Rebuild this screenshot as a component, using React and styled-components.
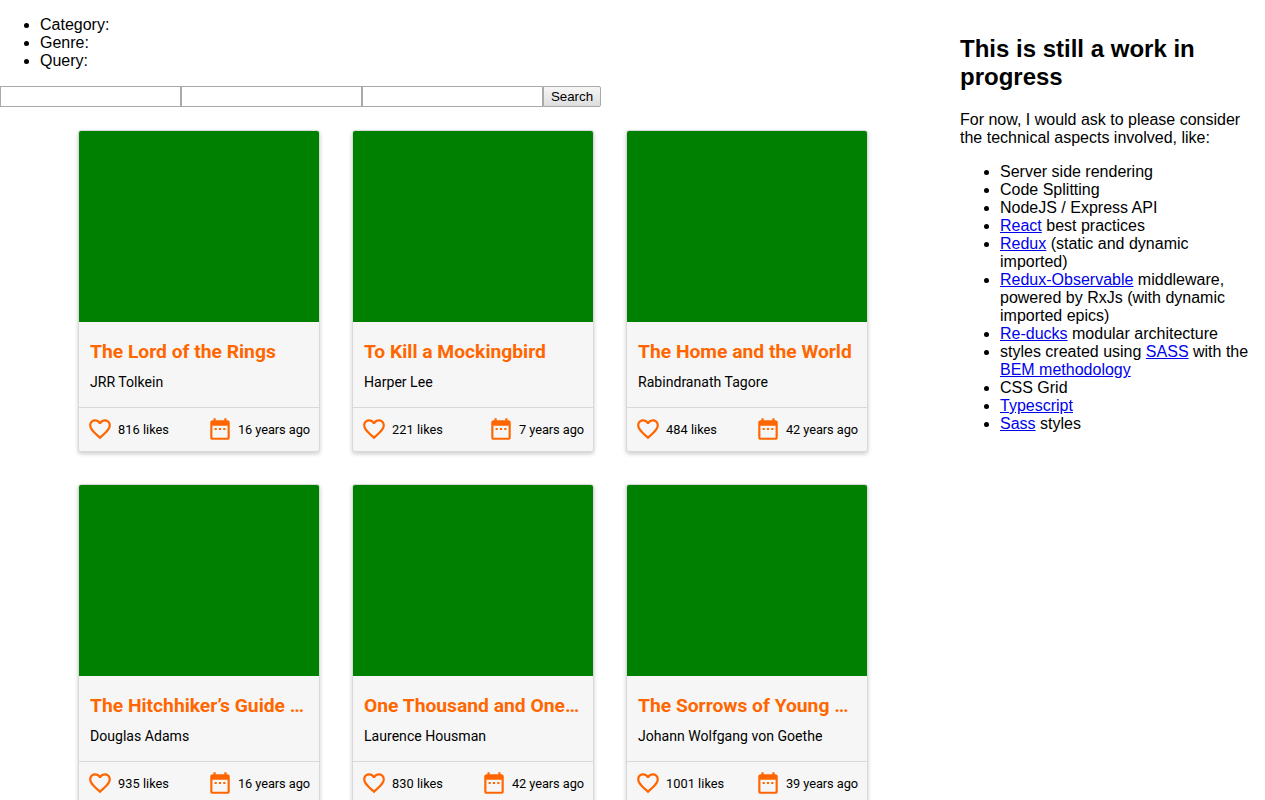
import React from "react";
import styled, { createGlobalStyle } from "styled-components";

const GlobalStyle = createGlobalStyle`
  body { margin: 0; background: #fff; color: #000; font: 16px/18px "Liberation Sans", Arial, sans-serif; overflow: hidden; }
`;
const Page = styled.div`
  display: grid;
  grid-template-columns: 945px 305px;
  column-gap: 15px;
  width: 1265px;
  height: 800px;
  overflow: hidden;
`;
const Main = styled.main`min-width: 0;`;
const Filters = styled.ul`margin: 16px 0; padding-left: 40px;`;
const SearchForm = styled.form`display: flex; height: 21px;`;
const Field = styled.input`
  box-sizing: border-box;
  width: 181px;
  height: 21px;
  margin: 0;
  padding: 1px;
  border: 1px solid #a9a9a9;
  border-radius: 0;
  background: #fff;
`;
const SearchButton = styled.button`
  box-sizing: border-box;
  width: 58px;
  height: 21px;
  margin: 0;
  padding: 0;
  border: 1px solid #a9a9a9;
  border-radius: 0 2px 2px 0;
  background: linear-gradient(#f6f6f6, #dedede);
  color: #000;
  font: 13.333px "Liberation Sans", Arial, sans-serif;
`;
const Books = styled.section`
  display: grid;
  grid-template-columns: repeat(3, 242px);
  gap: 32px;
  padding: 23px 0 0 78px;
`;
const Card = styled.article`
  box-sizing: border-box;
  height: 322px;
  border: 1px solid #d9d9d9;
  border-radius: 3px;
  overflow: hidden;
  background: #f6f6f6;
  box-shadow: 0 2px 4px rgba(0, 0, 0, 0.2);
  font-family: Roboto, sans-serif;
`;
const Cover = styled.div`height: 191px; background: #008000;`;
const Details = styled.div`box-sizing: border-box; height: 85px; padding: 18px 11px 0;`;
const Title = styled.h3`
  margin: 0;
  overflow: hidden;
  color: #ff6600;
  font-size: 19.25px;
  line-height: 24px;
  font-weight: 700;
  white-space: nowrap;
  text-overflow: ellipsis;
`;
const Author = styled.p`margin: 10px 0 0; font-size: 14.08px; line-height: 17px;`;
const Stats = styled.footer`
  display: flex;
  justify-content: space-between;
  box-sizing: border-box;
  height: 44px;
  padding: 8px 9px 0 8px;
  border-top: 1px solid #d9d9d9;
  font-size: 12.8px;
  line-height: 27px;
`;
const Stat = styled.span`
  display: flex;
  gap: 5px;
  letter-spacing: ${({ $tight }) => ($tight ? "-0.07px" : "0.03px")};
`;
const Icon = styled.svg`flex: none; width: 26px; height: 26px; fill: #ff6600;`;
const Sidebar = styled.aside`min-width: 0; padding-right: 15px;`;
const Heading = styled.h2`margin: 35px 0 20px; font-size: 24px; line-height: 28px;`;
const Intro = styled.p`margin: 0 0 16px;`;
const Topics = styled.ul`margin: 0; padding-left: 40px;`;
const Link = styled.a`color: #0000ee; text-decoration: underline;`;

const books = [
  ["The Lord of the Rings", "JRR Tolkein", 816, 16],
  ["To Kill a Mockingbird", "Harper Lee", 221, 7],
  ["The Home and the World", "Rabindranath Tagore", 484, 42],
  ["The Hitchhiker’s Guide to the Galaxy", "Douglas Adams", 935, 16],
  ["One Thousand and One Nights", "Laurence Housman", 830, 42],
  ["The Sorrows of Young Werther", "Johann Wolfgang von Goethe", 1001, 39],
];

const Heart = () => (
  <Icon viewBox="0 0 24 24"><path d="M16.5 3c-1.74 0-3.41.81-4.5 2.09C10.91 3.81 9.24 3 7.5 3 4.42 3 2 5.42 2 8.5c0 3.78 3.4 6.86 8.55 11.54L12 21.35l1.45-1.32C18.6 15.36 22 12.28 22 8.5 22 5.42 19.58 3 16.5 3zm-4.4 15.55l-.1.1-.1-.1C7.14 14.24 4 11.39 4 8.5 4 6.5 5.5 5 7.5 5c1.54 0 3.04.99 3.57 2.36h1.87C13.46 5.99 14.96 5 16.5 5c2 0 3.5 1.5 3.5 3.5 0 2.89-3.14 5.74-7.9 10.05z" /></Icon>
);
const Calendar = () => (
  <Icon viewBox="0 0 24 24"><path d="M9 11H7v2h2v-2zm4 0h-2v2h2v-2zm4 0h-2v2h2v-2zm2-7h-1V2h-2v2H8V2H6v2H5c-1.11 0-1.99.9-1.99 2L3 20c0 1.1.89 2 2 2h14c1.1 0 2-.9 2-2V6c0-1.1-.9-2-2-2zm0 16H5V9h14v11z" /></Icon>
);
const BookCard = ({ title, author, likes, years }) => (
  <Card>
    <Cover />
    <Details><Title>{title}</Title><Author>{author}</Author></Details>
    <Stats>
      <Stat><Heart />{likes} likes</Stat>
      <Stat $tight><Calendar />{years} years ago</Stat>
    </Stats>
  </Card>
);

export default function App() {
  return (
    <Page>
      <GlobalStyle />
      <Main>
        <Filters><li>Category:</li><li>Genre:</li><li>Query:</li></Filters>
        <SearchForm>
          <Field aria-label="Category" /><Field aria-label="Genre" /><Field aria-label="Query" />
          <SearchButton type="button">Search</SearchButton>
        </SearchForm>
        <Books>
          {books.map(([title, author, likes, years]) => (
            <BookCard key={title} title={title} author={author} likes={likes} years={years} />
          ))}
        </Books>
      </Main>
      <Sidebar>
        <Heading>This is still a work in progress</Heading>
        <Intro>For now, I would ask to please consider the technical aspects involved, like:</Intro>
        <Topics>
          <li>Server side rendering</li>
          <li>Code Splitting</li>
          <li>NodeJS / Express API</li>
          <li><Link href="#">React</Link> best practices</li>
          <li><Link href="#">Redux</Link> (static and dynamic imported)</li>
          <li><Link href="#">Redux-Observable</Link> middleware, powered by RxJs (with dynamic imported epics)</li>
          <li><Link href="#">Re-ducks</Link> modular architecture</li>
          <li>styles created using <Link href="#">SASS</Link> with the <Link href="#">BEM methodology</Link></li>
          <li>CSS Grid</li>
          <li><Link href="#">Typescript</Link></li>
          <li><Link href="#">Sass</Link> styles</li>
        </Topics>
      </Sidebar>
    </Page>
  );
}
